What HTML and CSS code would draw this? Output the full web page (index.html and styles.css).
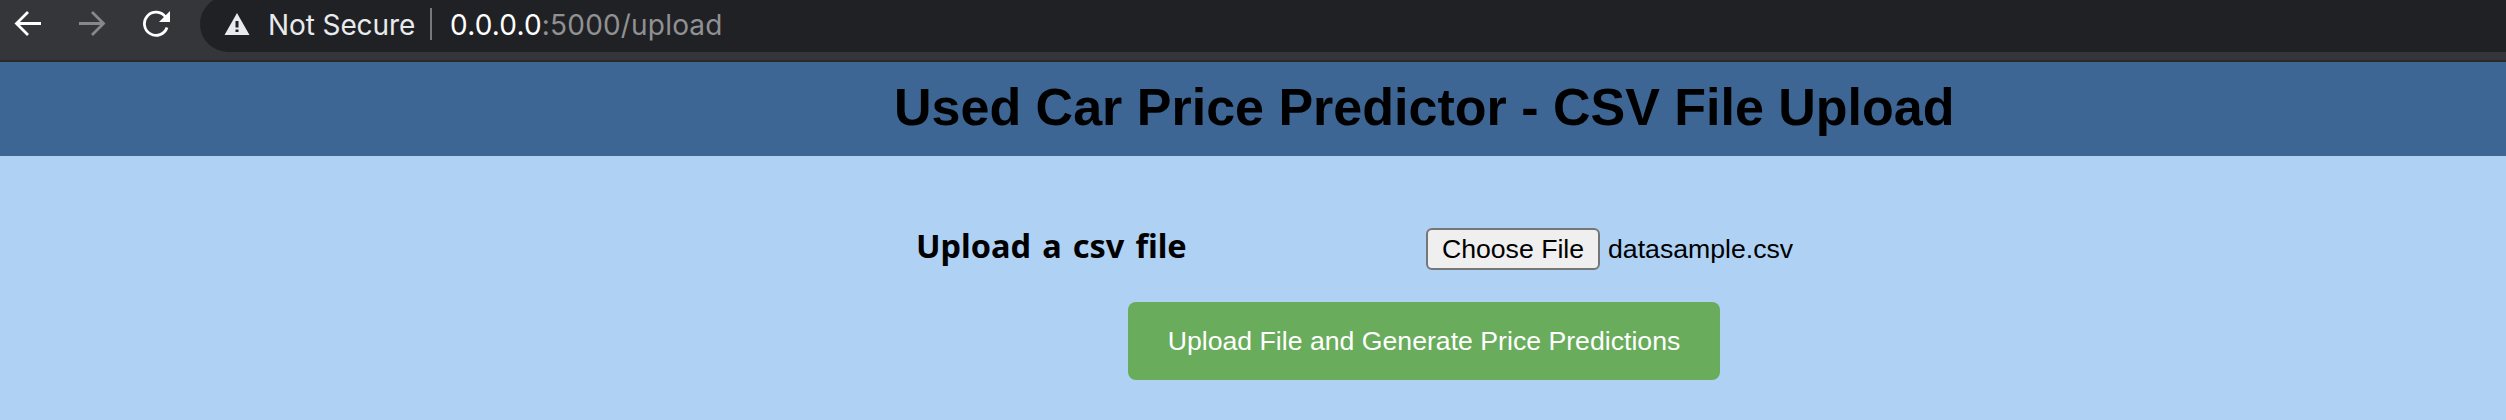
FILE: index.html
```html
<!DOCTYPE html>
<html lang="en">
<head>
<meta charset="utf-8">
<title>Used Car Price Predictor</title>
<link rel="stylesheet" href="styles.css">
</head>
<body>
<div class="toolbar">
  <nav class="nav">
    <svg class="icon" width="28" height="28" viewBox="0 0 28 28"><path d="M27 13.500H3M14 2L2.500 13.500L14 25" fill="none" stroke="#fff" stroke-width="2.800"/></svg>
    <svg class="icon" width="28" height="28" viewBox="0 0 28 28"><path d="M1 13.500H25M14 2L25.500 13.500L14 25" fill="none" stroke="#87888a" stroke-width="2.800"/></svg>
    <svg class="icon" width="28" height="28" viewBox="0 0 28 28"><path d="M23.500 7A11.600 11.600 0 1 0 25 17.500" fill="none" stroke="#fff" stroke-width="2.800"/><path d="M28 1V12H17z" fill="#fff"/></svg>
  </nav>
  <div class="omnibox">
    <svg class="warning" width="26" height="22" viewBox="0 0 26 22"><path fill-rule="evenodd" d="M13 0L25.500 22H.500zM11.500 8V14.500H14.500V8zM11.500 16.500V19H14.500V16.500z" fill="#e8eaed"/></svg>
    <span class="security">Not Secure</span>
    <span class="divider"></span>
    <span class="host">0.0.0.0</span><span class="path">:5000/upload</span>
  </div>
</div>
<header class="banner"><h1 class="title">Used Car Price Predictor - CSV File Upload</h1></header>
<main class="form">
  <div class="field">
    <span class="label">Upload a csv file</span>
    <button class="choose" type="button">Choose File</button>
    <span class="filename">datasample.csv</span>
  </div>
  <button class="submit" type="button">Upload File and Generate Price Predictions</button>
</main>
</body>
</html>
```
FILE: styles.css
```css
* { box-sizing: border-box; }
body {
  margin: 0;
  height: 420px;
  overflow: hidden;
  background: #aed1f4;
  color: #000;
  font-family: "Liberation Sans", Arial, sans-serif;
}
.toolbar {
  display: flex;
  height: 62px;
  background: #35363a;
  border-bottom: 2px solid #292929;
  overflow: hidden;
}
.nav {
  display: flex;
  gap: 36px;
  width: 200px;
  padding: 10px 0 0 14px;
}
.icon { flex: none; }
.omnibox {
  display: flex;
  align-items: center;
  flex: 1;
  height: 56px;
  margin-top: -4px;
  padding-left: 24px;
  border-radius: 28px 0 0 28px;
  background: #202124;
  font: 28px/54px Inter, sans-serif;
  white-space: nowrap;
}
.warning { flex: none; }
.security {
  width: 162px;
  margin-left: 18px;
  padding-top: 2px;
  color: #e8eaed;
  letter-spacing: -0.1px;
}
.divider { width: 2px; height: 32px; margin-right: 18px; background: #77787b; }
.host, .path { padding-top: 2px; letter-spacing: 0.18px; }
.host { color: #fff; }
.path { color: #909193; }
.banner {
  height: 94px;
  padding-left: 894px;
  background: #3d6694;
}
.title {
  margin: 0;
  font-size: 52px;
  line-height: 91px;
  white-space: nowrap;
}
.form { padding-top: 72px; }
.field {
  display: flex;
  align-items: center;
  height: 42px;
  padding-left: 916px;
  white-space: nowrap;
}
.label {
  width: 510px;
  padding-bottom: 7px;
  font: bold 32.5px/35px "Noto Sans", sans-serif;
  word-spacing: 2.6px;
}
.choose {
  width: 174px;
  height: 42px;
  padding: 0;
  border: 2px solid #767676;
  border-radius: 6px;
  background: #efefef;
  color: #000;
  font: 26.67px/36px "Liberation Sans", Arial, sans-serif;
}
.filename { margin-left: 8px; font-size: 26.67px; }
.submit {
  display: block;
  width: 592px;
  height: 78px;
  margin: 32px 0 0 1128px;
  padding: 0;
  border: 0;
  border-radius: 8px;
  background: #68ac5c;
  color: #fff;
  font: 26.67px/78px "Liberation Sans", Arial, sans-serif;
}
```
